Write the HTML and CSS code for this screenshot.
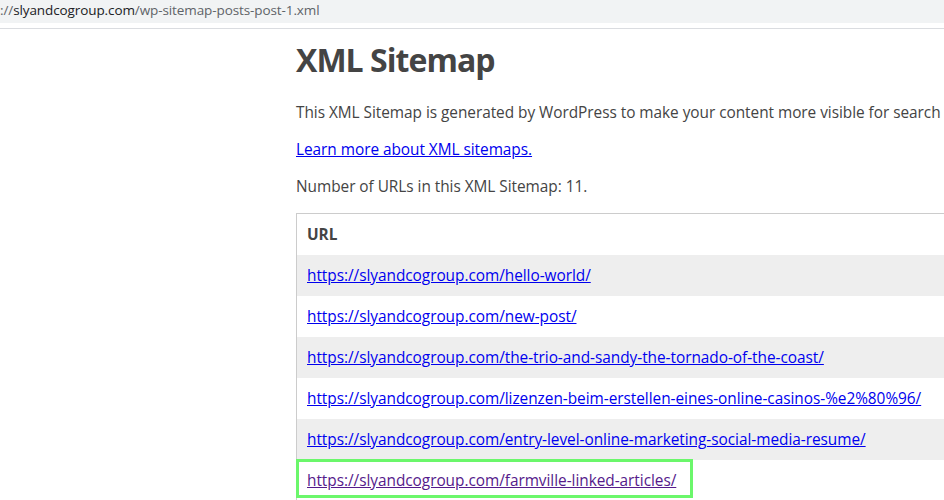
FILE: index.html
```html
<!DOCTYPE html>
<html lang="en">
<head>
<meta charset="utf-8">
<title>XML Sitemap</title>
<link rel="stylesheet" href="styles.css">
</head>
<body>
<header class="chrome">
  <div class="omnibox"><span class="dim">://</span><span class="host">slyandcogroup.com</span><span class="dim">/wp-sitemap-posts-post-1.xml</span></div>
</header>
<main class="sitemap">
  <h1 class="title">XML Sitemap</h1>
  <p class="text">This XML Sitemap is generated by WordPress to make your content more visible for search engines.</p>
  <p class="text"><a class="link" href="#">Learn more about XML sitemaps.</a></p>
  <p class="text">Number of URLs in this XML Sitemap: 11.</p>
  <table class="urls">
    <thead>
      <tr><th class="head">URL</th></tr>
    </thead>
    <tbody>
      <tr class="odd"><td class="loc"><a class="link" href="#">https://slyandcogroup.com/hello-world/</a></td></tr>
      <tr><td class="loc"><a class="link" href="#">https://slyandcogroup.com/new-post/</a></td></tr>
      <tr class="odd"><td class="loc"><a class="link" href="#">https://slyandcogroup.com/the-trio-and-sandy-the-tornado-of-the-coast/</a></td></tr>
      <tr><td class="loc"><a class="link" href="#">https://slyandcogroup.com/lizenzen-beim-erstellen-eines-online-casinos-%e2%80%96/</a></td></tr>
      <tr class="odd"><td class="loc"><a class="link" href="#">https://slyandcogroup.com/entry-level-online-marketing-social-media-resume/</a></td></tr>
      <tr><td class="loc marked"><a class="link visited" href="#">https://slyandcogroup.com/farmville-linked-articles/</a><span class="highlight"></span></td></tr>
    </tbody>
  </table>
</main>
</body>
</html>
```
FILE: styles.css
```css
html, body {
  margin: 0;
  padding: 0;
  background: #fff;
  overflow: hidden;
  height: 500px;
}

body {
  font-family: "Open Sans", "Noto Sans", sans-serif;
  color: #444;
}

.chrome {
  height: 28px;
  border-bottom: 1px solid #dadce0;
  background: #fff;
}

.omnibox {
  height: 23px;
  background: #f1f3f4;
  font-size: 13.5px;
  line-height: 21px;
  margin-left: 0;
  white-space: nowrap;
  letter-spacing: -0.1px;
}

.dim { color: #5f6368; }
.host { color: #202124; }

.sitemap {
  margin-left: 296px;
  width: 980px;
  padding-top: 9px;
  font-size: 15.4px;
  letter-spacing: -0.04px;
}

.title {
  margin: 0 0 21px;
  font-size: 32px;
  line-height: 43px;
  font-weight: 700;
  letter-spacing: -0.95px;
  color: #444;
}

.text {
  margin: 0 0 16px;
  line-height: 21px;
  white-space: nowrap;
}

.link { color: #0000ee; }
.link.visited { color: #551a8b; }

.urls {
  width: 100%;
  border: 1px solid #ccc;
  border-collapse: collapse;
}

.head {
  text-align: left;
  padding: 10px;
  line-height: 21px;
  font-weight: 700;
}

.loc {
  padding: 10px;
  line-height: 21px;
  white-space: nowrap;
}

.odd .loc { background: #eee; }

.marked { position: relative; }

.highlight {
  position: absolute;
  left: -1px;
  top: -1px;
  width: 397px;
  height: 39px;
  box-sizing: border-box;
  border: 3px solid #6bf76b;
  pointer-events: none;
}
```
